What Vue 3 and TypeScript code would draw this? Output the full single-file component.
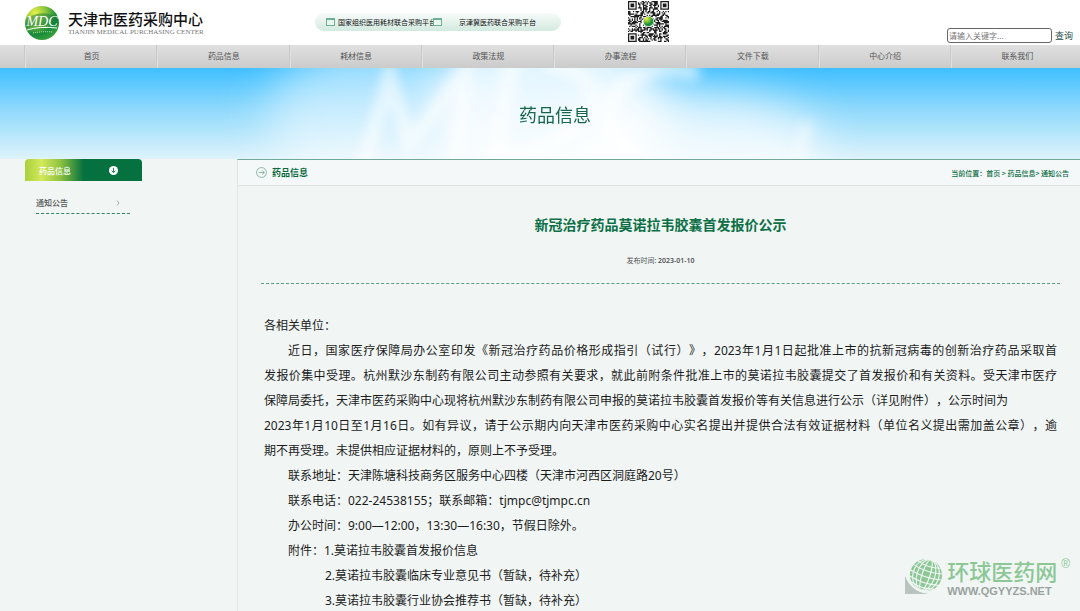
<script setup lang="ts">
interface Line {
  text: string
  level: 'flush' | 'indent' | 'nested'
  full?: boolean
}

const navItems: string[] = ['首页', '药品信息', '耗材信息', '政策法规', '办事流程', '文件下载', '中心介绍', '联系我们']

const lines: Line[] = [
  { text: '各相关单位：', level: 'flush' },
  { text: '近日，国家医疗保障局办公室印发《新冠治疗药品价格形成指引（试行）》，2023年1月1日起批准上市的抗新冠病毒的创新治疗药品采取首', level: 'indent', full: true },
  { text: '发报价集中受理。杭州默沙东制药有限公司主动参照有关要求，就此前附条件批准上市的莫诺拉韦胶囊提交了首发报价和有关资料。受天津市医疗', level: 'flush', full: true },
  { text: '保障局委托，天津市医药采购中心现将杭州默沙东制药有限公司申报的莫诺拉韦胶囊首发报价等有关信息进行公示（详见附件），公示时间为', level: 'flush' },
  { text: '2023年1月10日至1月16日。如有异议，请于公示期内向天津市医药采购中心实名提出并提供合法有效证据材料（单位名义提出需加盖公章），逾', level: 'flush', full: true },
  { text: '期不再受理。未提供相应证据材料的，原则上不予受理。', level: 'flush' },
  { text: '联系地址：天津陈塘科技商务区服务中心四楼（天津市河西区洞庭路20号）', level: 'indent' },
  { text: '联系电话：022-24538155；联系邮箱：tjmpc@tjmpc.cn', level: 'indent' },
  { text: '办公时间：9:00—12:00，13:30—16:30，节假日除外。', level: 'indent' },
  { text: '附件：1.莫诺拉韦胶囊首发报价信息', level: 'indent' },
  { text: '2.莫诺拉韦胶囊临床专业意见书（暂缺，待补充）', level: 'nested' },
  { text: '3.莫诺拉韦胶囊行业协会推荐书（暂缺，待补充）', level: 'nested' },
]

const QR_SIZE = 33

function finder(x: number, y: number): boolean | null {
  const corners = [[0, 0], [QR_SIZE - 7, 0], [0, QR_SIZE - 7]]
  for (const [cx, cy] of corners) {
    const dx = x - cx
    const dy = y - cy
    if (dx >= -1 && dx <= 7 && dy >= -1 && dy <= 7) {
      const ring = Math.max(Math.abs(dx - 3), Math.abs(dy - 3))
      return ring === 3 || ring <= 1
    }
  }
  return null
}

function qrPath(): string {
  let seed = 20230110
  let d = ''
  for (let y = 0; y < QR_SIZE; y++) {
    for (let x = 0; x < QR_SIZE; x++) {
      seed = (seed * 1103515245 + 12345) % 2147483648
      const mark = finder(x, y)
      const on = mark === null ? (seed >> 12) % 100 < 52 : mark
      if (on) d += `M${x} ${y}h1v1h-1z`
    }
  }
  return d
}

const qr = qrPath()
</script>

<template>
  <div class="page">
    <header class="top">
      <a class="brand" href="#">
        <svg class="brand-mark" viewBox="0 0 34 34" aria-hidden="true">
          <defs>
            <radialGradient id="ball" cx="0.3" cy="0.2" r="0.9">
              <stop offset="0" stop-color="#e8f04a" />
              <stop offset="0.35" stop-color="#8cc63c" />
              <stop offset="0.7" stop-color="#168a3c" />
              <stop offset="1" stop-color="#3fa53a" />
            </radialGradient>
          </defs>
          <circle cx="17" cy="17" r="17" fill="url(#ball)" />
          <path d="M1 22Q14 18 33 20Q34 15 32 11Q18 3 2 12Q-1 17 1 22Z" fill="#0b7440" opacity=".45" />
          <text x="17" y="20" text-anchor="middle" class="mark-text">MDC</text>
          <path d="M2 24Q14 20 32 22" fill="none" stroke="#fff" stroke-width="1" />
          <path d="M8 27Q18 25 28 26" fill="none" stroke="#d9efb0" stroke-width="1" stroke-dasharray="1 1" />
        </svg>
        <span class="brand-words">
          <span class="brand-cn">天津市医药采购中心</span>
          <span class="brand-en">TIANJIN MEDICAL PURCHASING CENTER</span>
        </span>
      </a>
      <div class="platforms">
        <a href="#"><i class="box"></i>国家组织医用耗材联合采购平台</a>
        <a href="#"><i class="box second"></i>京津冀医药联合采购平台</a>
      </div>
      <svg class="qr" viewBox="0 0 33 33" role="img" aria-label="二维码">
        <path :d="qr" fill="#1c1c1c" />
        <circle cx="16.5" cy="16.5" r="4.5" fill="#fff" />
        <circle cx="16.5" cy="16.5" r="4" fill="url(#ball)" />
      </svg>
      <form class="search" @submit.prevent>
        <input type="text" aria-label="关键字" placeholder="请输入关键字..." />
        <button type="submit">查询</button>
      </form>
    </header>

    <nav class="nav">
      <a v-for="item in navItems" :key="item" href="#">{{ item }}</a>
    </nav>

    <section class="banner">
      <svg class="banner-art" viewBox="0 0 1080 90" preserveAspectRatio="xMidYMid slice" aria-hidden="true">
        <defs>
          <filter id="soft" x="-20%" y="-20%" width="140%" height="140%"><feGaussianBlur stdDeviation="6" /></filter>
          <filter id="haze" x="-60%" y="-100%" width="220%" height="300%"><feGaussianBlur stdDeviation="22" /></filter>
        </defs>
        <g filter="url(#haze)" fill="#fff">
          <ellipse cx="550" cy="45" rx="115" ry="110" opacity=".85" />
          <ellipse cx="380" cy="50" rx="110" ry="80" opacity=".5" />
          <ellipse cx="690" cy="80" rx="130" ry="55" opacity=".7" />
        </g>
        <g filter="url(#soft)" fill="none" stroke="#fff" stroke-linecap="round">
          <path d="M366 95L391 10L411 75L468 0L455 95" stroke-width="15" opacity=".6" />
          <path d="M512 -5L494 95" stroke-width="17" opacity=".55" />
          <path d="M550 -5Q610 10 585 48Q555 85 500 88" stroke-width="16" opacity=".55" />
          <path d="M690 4Q645 -8 618 22Q592 62 640 92" stroke-width="17" opacity=".6" />
          <path d="M803 58L795 92" stroke-width="14" opacity=".4" />
        </g>
      </svg>
      <h1>药品信息</h1>
    </section>

    <div class="columns">
      <aside class="side">
        <h2 class="side-head">
          <span>药品信息</span>
          <svg viewBox="0 0 10 10" aria-hidden="true">
            <circle cx="5" cy="5" r="5" fill="#fff" />
            <path d="M5 2v5M3 5.2L5 7.3L7 5.2" fill="none" stroke="#0a7340" stroke-width="1" />
          </svg>
        </h2>
        <a class="side-link" href="#">
          <span>通知公告</span>
          <svg viewBox="0 0 4 6" aria-hidden="true"><path d="M1 .5L3 3L1 5.5" fill="none" stroke="#8d9a94" stroke-width=".8" /></svg>
        </a>
      </aside>

      <main class="main">
        <div class="bar">
          <svg viewBox="0 0 10 10" aria-hidden="true">
            <circle cx="5" cy="5" r="4.5" fill="none" stroke="#7fae9a" stroke-width=".8" />
            <path d="M2.5 5h5M5.5 3L7.5 5L5.5 7" fill="none" stroke="#7fae9a" stroke-width=".8" />
          </svg>
          <h2>药品信息</h2>
          <div class="crumbs">
            当前位置：<a href="#">首页</a> &gt; <a href="#">药品信息</a>&gt; <a href="#">通知公告</a>
          </div>
        </div>
        <article class="article">
          <div class="article-head">
            <h3>新冠治疗药品莫诺拉韦胶囊首发报价公示</h3>
            <p>发布时间: <b>2023-01-10</b></p>
          </div>
          <div class="text">
            <div v-for="line in lines" :key="line.text" :class="[line.level, { full: line.full }]">{{ line.text }}</div>
          </div>
        </article>
      </main>
    </div>

    <div class="watermark">
      <svg viewBox="0 0 38 38" aria-hidden="true">
        <path d="M0 18V36H24Q6 34 0 18Z" fill="#b9c4bf" />
        <g transform="rotate(18 21 17)">
          <circle cx="21" cy="17" r="16" fill="#8cc795" />
          <g fill="none" stroke="#f1f6f5" stroke-width="1.1">
            <ellipse cx="21" cy="17" rx="4" ry="16" />
            <ellipse cx="21" cy="17" rx="9" ry="16" />
            <ellipse cx="21" cy="17" rx="13" ry="16" />
            <path d="M9 6Q21 10 33 6M6 11Q21 15 36 11M5 17Q21 21 37 17M6 23Q21 27 36 23M9 28Q21 32 33 28" />
          </g>
        </g>
      </svg>
      <span class="wm-words">
        <span class="wm-cn">环球医药网</span>
        <span class="wm-en">WWW.QGYYZS.NET</span>
      </span>
      <span class="wm-reg">®</span>
    </div>
  </div>
</template>

<style>
body {
  margin: 0;
  background: #f1f6f5;
}
</style>

<style scoped>
.page {
  position: relative;
  min-height: 100vh;
  background: #f1f6f5;
  font-family: "Noto Sans CJK SC", sans-serif;
  font-size: 8px;
  color: #555;
  text-spacing-trim: space-all;
}
a {
  color: inherit;
  text-decoration: none;
}
h1, h2, h3, p {
  margin: 0;
}
.top {
  display: grid;
  grid-template-columns: 290px 313px 1fr auto;
  height: 45px;
  padding: 0 7px 0 25px;
  background: #fff;
}
.brand {
  display: flex;
  align-items: center;
  gap: 9px;
}
.brand-mark {
  width: 34px;
  height: 34px;
}
.mark-text {
  font: italic 14px "Liberation Serif", serif;
  fill: #fff;
}
.brand-words {
  display: flex;
  flex-direction: column;
  white-space: nowrap;
}
.brand-cn {
  font-size: 15px;
  font-weight: 500;
  line-height: 18px;
  color: #111;
}
.brand-en {
  font-family: "Liberation Serif", serif;
  font-size: 7px;
  line-height: 8px;
  color: #777;
}
.platforms {
  display: flex;
  align-items: center;
  justify-self: start;
  box-sizing: border-box;
  width: 246px;
  height: 18px;
  margin-top: 13px;
  padding-left: 11px;
  border-radius: 9px;
  background: linear-gradient(#f7fbf9, #d3eae0);
  font-size: 7px;
  color: #111;
  white-space: nowrap;
}
.platforms a {
  display: flex;
  align-items: center;
}
.box {
  box-sizing: border-box;
  width: 9px;
  height: 8px;
  margin-right: 3px;
  border: 1px solid #6fae97;
  border-top-width: 2px;
  background: #e9f6f0;
}
.box.second {
  margin-left: -3px;
  margin-right: 17px;
}
.qr {
  width: 41px;
  height: 41px;
  margin-top: 1px;
}
.search {
  display: flex;
  align-items: center;
  align-self: end;
  gap: 3px;
  margin-bottom: 2px;
}
.search input {
  box-sizing: border-box;
  width: 105px;
  height: 15px;
  padding: 0 1px;
  border: 1px solid #666;
  border-radius: 3px;
  background: #fff;
  font: 8px "Noto Sans CJK SC", sans-serif;
}
.search input::placeholder {
  color: #777;
}
.search button {
  padding: 0;
  border: 0;
  background: none;
  font: 9px/15px "Noto Sans CJK SC", sans-serif;
  color: #1f4f4a;
}
.nav {
  display: grid;
  grid-template-columns: repeat(8, 1fr);
  height: 23px;
  padding-left: 25px;
  margin-right: -3px;
  background: linear-gradient(#e0e0e0, #cbcbcb);
}
.nav a {
  border-left: 1px solid #dfdfdf;
  box-shadow: -1px 0 #cacaca;
  line-height: 21px;
  text-align: center;
}
.banner {
  display: grid;
  height: 91px;
  overflow: hidden;
  background: linear-gradient(#3fbfff, #8fd9fc 45%, #def3fb);
}
.banner-art {
  grid-area: 1 / 1;
  width: 100%;
  height: 91px;
}
.banner h1 {
  z-index: 1;
  grid-area: 1 / 1;
  place-self: center;
  padding-left: 30px;
  font-size: 18px;
  font-weight: 400;
  line-height: 24px;
  color: #17664a;
}
.columns {
  display: grid;
  grid-template-columns: 237px 1fr;
}
.side {
  padding-left: 25px;
}
.side-head {
  display: flex;
  align-items: center;
  justify-content: space-between;
  box-sizing: border-box;
  width: 117px;
  height: 22px;
  padding: 0 24px 0 14px;
  border-radius: 4px 4px 0 0;
  background: linear-gradient(90deg, #a9d03c, #d3e95a 14%, #8fc340 30%, #05713f 50%);
  font-size: 8px;
  font-weight: 500;
  color: #fff;
}
.side-head svg {
  width: 9px;
  height: 9px;
}
.side-link {
  display: flex;
  align-items: center;
  justify-content: space-between;
  box-sizing: border-box;
  width: 94px;
  height: 22px;
  margin: 11px 0 0 11px;
  padding-right: 10px;
  border-bottom: 1px dashed #2f8463;
  font-weight: 500;
}
.side-link svg {
  width: 4px;
  height: 6px;
}
.main {
  border-top: 1px solid #6fa99a;
  border-left: 1px solid #dfe7e4;
}
.bar {
  display: flex;
  align-items: center;
  height: 25px;
  padding: 0 11px 0 18px;
  border-bottom: 1px solid #dde5e2;
  background: #f4f8f8;
  color: #0a6a42;
}
.bar svg {
  width: 11px;
  height: 11px;
  margin-right: 5px;
}
.bar h2 {
  font-size: 9px;
  font-weight: 700;
}
.crumbs {
  margin-left: auto;
  font-size: 7px;
  font-weight: 500;
}
.article {
  padding: 26px 20px 0 23px;
}
.article-head {
  padding-bottom: 14px;
  border-bottom: 1px dashed #5d9c84;
  text-align: center;
}
.article-head h3 {
  font-size: 14px;
  font-weight: 700;
  line-height: 24px;
  color: #0c6f45;
}
.article-head p {
  margin-top: 16px;
  font-size: 7px;
  line-height: 16px;
}
.article-head b {
  font-family: "Noto Sans", sans-serif;
  font-weight: 600;
}
.text {
  padding: 29px 3px 0;
  font-family: "Noto Sans", "Noto Sans CJK SC", sans-serif;
  font-size: 12px;
  line-height: 25px;
  color: #1c1c1c;
}
.indent {
  padding-left: 24px;
}
.nested {
  padding-left: 61px;
}
.full {
  text-align: justify;
  text-align-last: justify;
}
.watermark {
  position: absolute;
  right: 10px;
  bottom: 16px;
  display: flex;
  align-items: flex-start;
  gap: 4px;
}
.watermark svg {
  width: 38px;
  height: 38px;
}
.wm-words {
  display: flex;
  flex-direction: column;
}
.wm-cn {
  font-size: 22px;
  font-weight: 500;
  line-height: 25px;
  color: #8cc795;
}
.wm-en {
  margin-top: 2px;
  font: bold 11px/12px "Liberation Sans", sans-serif;
  color: #9aa29e;
}
.wm-reg {
  font: 12px/12px "Liberation Sans", sans-serif;
  color: #8cc795;
}
</style>
